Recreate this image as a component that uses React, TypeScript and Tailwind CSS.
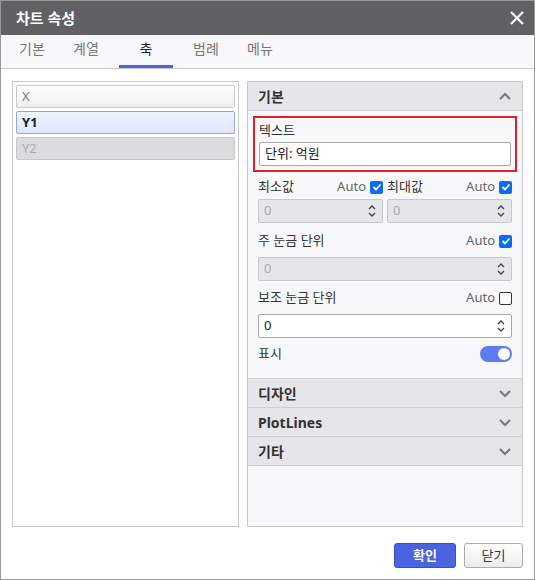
import React from "react";

const Chevron = ({ up }: { up?: boolean }) => (
  <svg width="14" height="14" viewBox="0 0 14 14" fill="none" stroke="#777" strokeWidth="2">
    <path d={up ? "M2 10 L7 5 L12 10" : "M2 5 L7 10 L12 5"} />
  </svg>
);

const Spin = () => (
  <svg width="10" height="16" viewBox="0 0 10 16" fill="none" stroke="#444" strokeWidth="1.4">
    <path d="M2 6 L5 3 L8 6 M2 10 L5 13 L8 10" />
  </svg>
);

const Check = ({ on }: { on: boolean }) =>
  on ? (
    <span className="w-[13px] h-[13px] rounded-[2px] bg-[#0a6cf5] flex items-center justify-center">
      <svg width="10" height="10" viewBox="0 0 10 10" fill="none" stroke="#fff" strokeWidth="1.8">
        <path d="M1.5 5 L4 7.5 L8.5 2.5" />
      </svg>
    </span>
  ) : (
    <span className="w-[13px] h-[13px] rounded-[2px] border border-[#333] bg-white" />
  );

const Num = ({ disabled, className = "" }: { disabled?: boolean; className?: string }) => (
  <div className={`h-[24px] border rounded-[2px] flex items-center justify-between pl-[5px] pr-[5px] ${disabled ? "bg-[#e6e6ea] border-[#c8c8cc] text-[#aaa]" : "bg-white border-[#aaa] text-[#222]"} ${className}`}>
    <span>0</span>
    <Spin />
  </div>
);

const Section = ({ title }: { title: string }) => (
  <div className="h-[29px] bg-[#e6e6ea] border-b border-[#cfcfd3] flex items-center justify-between px-[10px] text-[14px] font-bold text-[#333]">
    <span>{title}</span>
    <Chevron />
  </div>
);

export default function App() {
  return (
    <div className="w-[535px] h-[580px] bg-white border border-[#999] flex flex-col text-[13px] text-[#333]" style={{ fontFamily: "'Noto Sans', 'Noto Sans CJK KR', sans-serif" }}>
      <div className="h-[34px] bg-[#616163] flex items-center justify-between pl-[15px] pr-[10px] text-white">
        <span className="text-[15px] font-bold">차트 속성</span>
        <svg width="14" height="14" viewBox="0 0 14 14" stroke="#fff" strokeWidth="2.2">
          <path d="M1 1 L13 13 M13 1 L1 13" />
        </svg>
      </div>
      <div className="h-[34px] bg-[#f8f8fa] border-b border-[#c8c8cc] flex items-end pl-[4px] text-[14px] text-[#777]">
        {["기본", "계열", "축", "범례", "메뉴"].map((t) => (
          <div key={t} className={`w-[54px] text-center pb-[6px] border-b-[3px] ${t === "축" ? "border-[#4a63e0] text-[#222] w-[48px] mx-[6px]" : "border-transparent"}`}>
            {t}
          </div>
        ))}
      </div>
      <div className="flex-1 flex gap-[8px] px-[11px] pt-[12px] pb-[52px]">
        <div className="w-[227px] border border-[#c8c8cc] p-[3px] flex flex-col gap-[3px]">
          <div className="h-[23px] border border-[#c8c8cc] rounded-[2px] bg-gradient-to-b from-white to-[#efeff1] px-[5px] flex items-center text-[#777]">X</div>
          <div className="h-[23px] border border-[#8aa7f0] rounded-[2px] bg-gradient-to-b from-[#f0f4ff] to-[#dfe7ff] px-[5px] flex items-center font-bold text-[#222]">Y1</div>
          <div className="h-[23px] border border-[#c8c8cc] rounded-[2px] bg-[#dcdce0] px-[5px] flex items-center text-[#aaa]">Y2</div>
        </div>
        <div className="flex-1 border border-[#c8c8cc] bg-[#f8f8fa] flex flex-col">
          <div className="h-[29px] bg-[#e6e6ea] border-b border-[#cfcfd3] flex items-center justify-between px-[10px] text-[14px] font-bold">
            <span>기본</span>
            <Chevron up />
          </div>
          <div className="px-[5px] pt-[5px] pb-[8px] flex flex-col">
            <div className="border-2 border-[#e3202a] px-[4px] pt-[2px] pb-[4px]">
              <div className="h-[22px] flex items-center">텍스트</div>
              <div className="h-[24px] bg-white border border-[#aaa] rounded-[2px] flex items-center px-[5px] text-[#222]">단위: 억원</div>
            </div>
            <div className="px-[5px] flex flex-col">
              <div className="flex gap-[4px] mt-[3px]">
                <div className="flex-1 flex flex-col">
                  <div className="h-[24px] flex items-center justify-between">
                    <span>최소값</span>
                    <span className="flex items-center gap-[4px] text-[#666]">Auto <Check on /></span>
                  </div>
                  <Num disabled />
                </div>
                <div className="flex-1 flex flex-col">
                  <div className="h-[24px] flex items-center justify-between">
                    <span>최대값</span>
                    <span className="flex items-center gap-[4px] text-[#666]">Auto <Check on /></span>
                  </div>
                  <Num disabled />
                </div>
              </div>
              <div className="h-[32px] flex items-center justify-between mt-[2px]">
                <span>주 눈금 단위</span>
                <span className="flex items-center gap-[4px] text-[#666]">Auto <Check on /></span>
              </div>
              <Num disabled />
              <div className="h-[32px] flex items-center justify-between mt-[1px]">
                <span>보조 눈금 단위</span>
                <span className="flex items-center gap-[4px] text-[#666]">Auto <Check on={false} /></span>
              </div>
              <Num />
              <div className="h-[32px] flex items-center justify-between">
                <span>표시</span>
                <span className="w-[32px] h-[16px] rounded-full bg-[#5b7cf5] flex items-center justify-end pr-[2px]">
                  <span className="w-[12px] h-[12px] rounded-full bg-white" />
                </span>
              </div>
            </div>
          </div>
          <div className="border-t border-[#cfcfd3]" />
          <Section title="디자인" />
          <Section title="PlotLines" />
          <Section title="기타" />
        </div>
      </div>
      <div className="absolute left-0 top-[543px] w-[535px] flex justify-end gap-[8px] pr-[12px]">
        <button className="w-[62px] h-[25px] rounded-[3px] bg-[#4a63e0] border border-[#3a50c0] text-white font-bold">확인</button>
        <button className="w-[59px] h-[25px] rounded-[3px] bg-gradient-to-b from-white to-[#ececee] border border-[#aaa] text-[#333]">닫기</button>
      </div>
    </div>
  );
}
